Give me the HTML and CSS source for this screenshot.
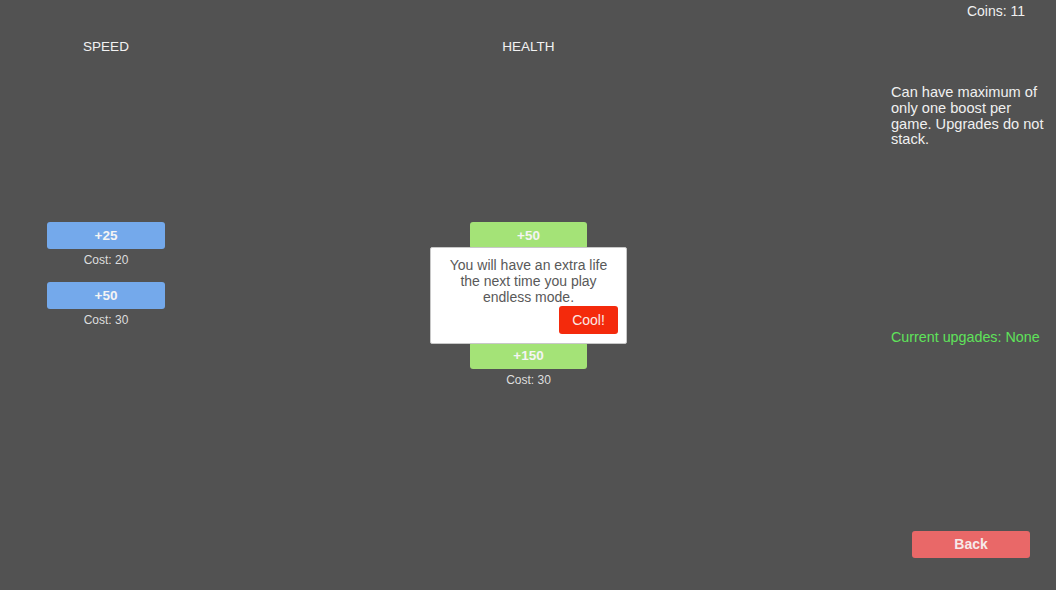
FILE: index.html
```html
<!DOCTYPE html>
<html>
<head>
<meta charset="utf-8">
<link rel="stylesheet" href="styles.css">
</head>
<body>
<div class="screen">
  <div class="topbar"><span class="coins">Coins: 11</span></div>
  <div class="main">
    <div class="col">
      <div class="label">SPEED</div>
      <div class="items">
        <div class="item"><div class="btn blue">+25</div><div class="cost">Cost: 20</div></div>
        <div class="item"><div class="btn blue">+50</div><div class="cost">Cost: 30</div></div>
      </div>
    </div>
    <div class="col health">
      <div class="label">HEALTH</div>
      <div class="items">
        <div class="item"><div class="btn green">+50</div><div class="cost">Cost: 10</div></div>
        <div class="item"><div class="btn green">+100</div><div class="cost">Cost: 20</div></div>
        <div class="item"><div class="btn green">+150</div><div class="cost">Cost: 30</div></div>
      </div>
      <div class="dialog">
        <p class="dialog-text">You will have an extra life the next time you play endless mode.</p>
        <div class="dialog-actions"><div class="cool">Cool!</div></div>
      </div>
    </div>
    <div class="side">
      <p class="info">Can have maximum of only one boost per game. Upgrades do not stack.</p>
      <p class="current">Current upgades: None</p>
      <div class="back">Back</div>
    </div>
  </div>
</div>
</body>
</html>
```
FILE: styles.css
```css
* { box-sizing: border-box; }
html, body { margin: 0; padding: 0; }
body {
  background: #525252;
  font-family: "Liberation Sans", Arial, sans-serif;
  color: #ececec;
}
.screen {
  width: 1056px;
  height: 590px;
  display: flex;
  flex-direction: column;
  overflow: hidden;
}
.topbar {
  height: 22px;
  display: flex;
  justify-content: flex-end;
  padding: 3px 31px 0 0;
}
.coins { font-size: 14px; line-height: 16px; color: #f0f0f0; }
.main {
  flex: 1;
  display: flex;
  padding-left: 47px;
}
.col {
  width: 118px;
  display: flex;
  flex-direction: column;
  align-items: center;
}
.health { margin-left: 305px; width: 117px; position: relative; }
.label {
  margin-top: 17px;
  font-size: 13.5px;
  line-height: 15px;
  color: #f2f2f2;
}
.items { margin-top: 168px; width: 100%; display: flex; flex-direction: column; }
.item { height: 60px; display: flex; flex-direction: column; align-items: center; }
.btn {
  width: 100%;
  height: 27px;
  border-radius: 3px;
  font-size: 13.5px;
  font-weight: bold;
  line-height: 27px;
  text-align: center;
  color: #f4f4f4;
}
.blue { background: #74a9eb; }
.green { background: #a4e377; }
.cost {
  margin-top: 4px;
  font-size: 12px;
  line-height: 14px;
  color: #dedede;
}
.dialog {
  position: absolute;
  left: -40px;
  top: 225px;
  width: 197px;
  height: 97px;
  background: #fff;
  border: 1px solid #c8c8c8;
  border-radius: 2px;
  padding: 9px 8px 0;
}
.dialog-text {
  margin: 0;
  font-size: 14px;
  line-height: 16px;
  color: #595959;
  text-align: center;
}
.dialog-actions { display: flex; justify-content: flex-end; margin-top: 1px; }
.cool {
  width: 59px;
  height: 28px;
  background: #f42a0c;
  border-radius: 3px;
  color: #fbe9e6;
  font-size: 14px;
  line-height: 28px;
  text-align: center;
}
.side {
  margin-left: 304px;
  flex: 1;
  display: flex;
  flex-direction: column;
  padding-bottom: 32px;
}
.info {
  margin: 63px 0 0;
  width: 160px;
  font-size: 14.6px;
  line-height: 15.8px;
  color: #f0f0f0;
}
.current {
  margin: 181px 0 0;
  font-size: 14.3px;
  line-height: 16px;
  color: #5fe35a;
}
.back {
  margin-top: auto;
  margin-left: 21px;
  width: 118px;
  height: 27px;
  border-radius: 3px;
  background: #e96868;
  color: #f6eaea;
  font-weight: bold;
  font-size: 14px;
  line-height: 27px;
  text-align: center;
}
```
